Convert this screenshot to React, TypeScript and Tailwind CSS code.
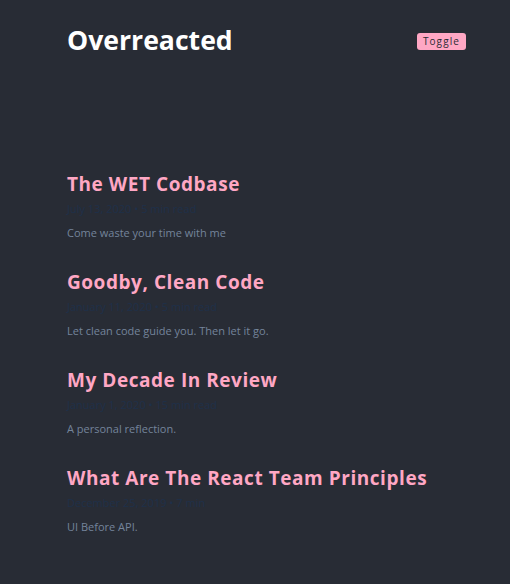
import React from 'react';

const posts = [
  { title: 'The WET Codbase', date: 'July 13, 2020 • 5 min read', blurb: 'Come waste your time with me' },
  { title: 'Goodby, Clean Code', date: 'January 11, 2020 • 5 min read', blurb: 'Let clean code guide you. Then let it go.' },
  { title: 'My Decade In Review', date: 'January 1, 2020 • 15 min read', blurb: 'A personal reflection.' },
  { title: 'What Are The React Team Principles', date: 'December 25, 2019 • 7 min', blurb: 'UI Before API.' },
];

export default function App() {
  return (
    <div className="min-h-[584px] w-full bg-[#282c35] font-['Open_Sans',sans-serif]">
      <div className="ml-[67px] w-[399px] pt-[22px]">
        <header className="flex items-start justify-between">
          <h1 className="text-[26.6px] font-bold leading-[36px] text-white">Overreacted</h1>
          <button className="mt-[11px] h-[17px] rounded-[3px] bg-[#ffa7c4] px-[6px] text-[10px] leading-[17px] tracking-[1.1px] text-[#2a2a33]">
            Toggle
          </button>
        </header>
        <main className="mt-[113px] flex flex-col gap-[28px]">
          {posts.map((p) => (
            <article key={p.title} className="flex flex-col">
              <h3 className="text-[19px] font-bold leading-[26px] tracking-[0.55px] text-[#ffa7c4]">{p.title}</h3>
              <small className="mt-[4px] text-[11px] leading-[16px] text-[#1f3049]">{p.date}</small>
              <p className="mt-[8px] text-[11px] leading-[16px] text-[#74849b]">{p.blurb}</p>
            </article>
          ))}
        </main>
      </div>
    </div>
  );
}
